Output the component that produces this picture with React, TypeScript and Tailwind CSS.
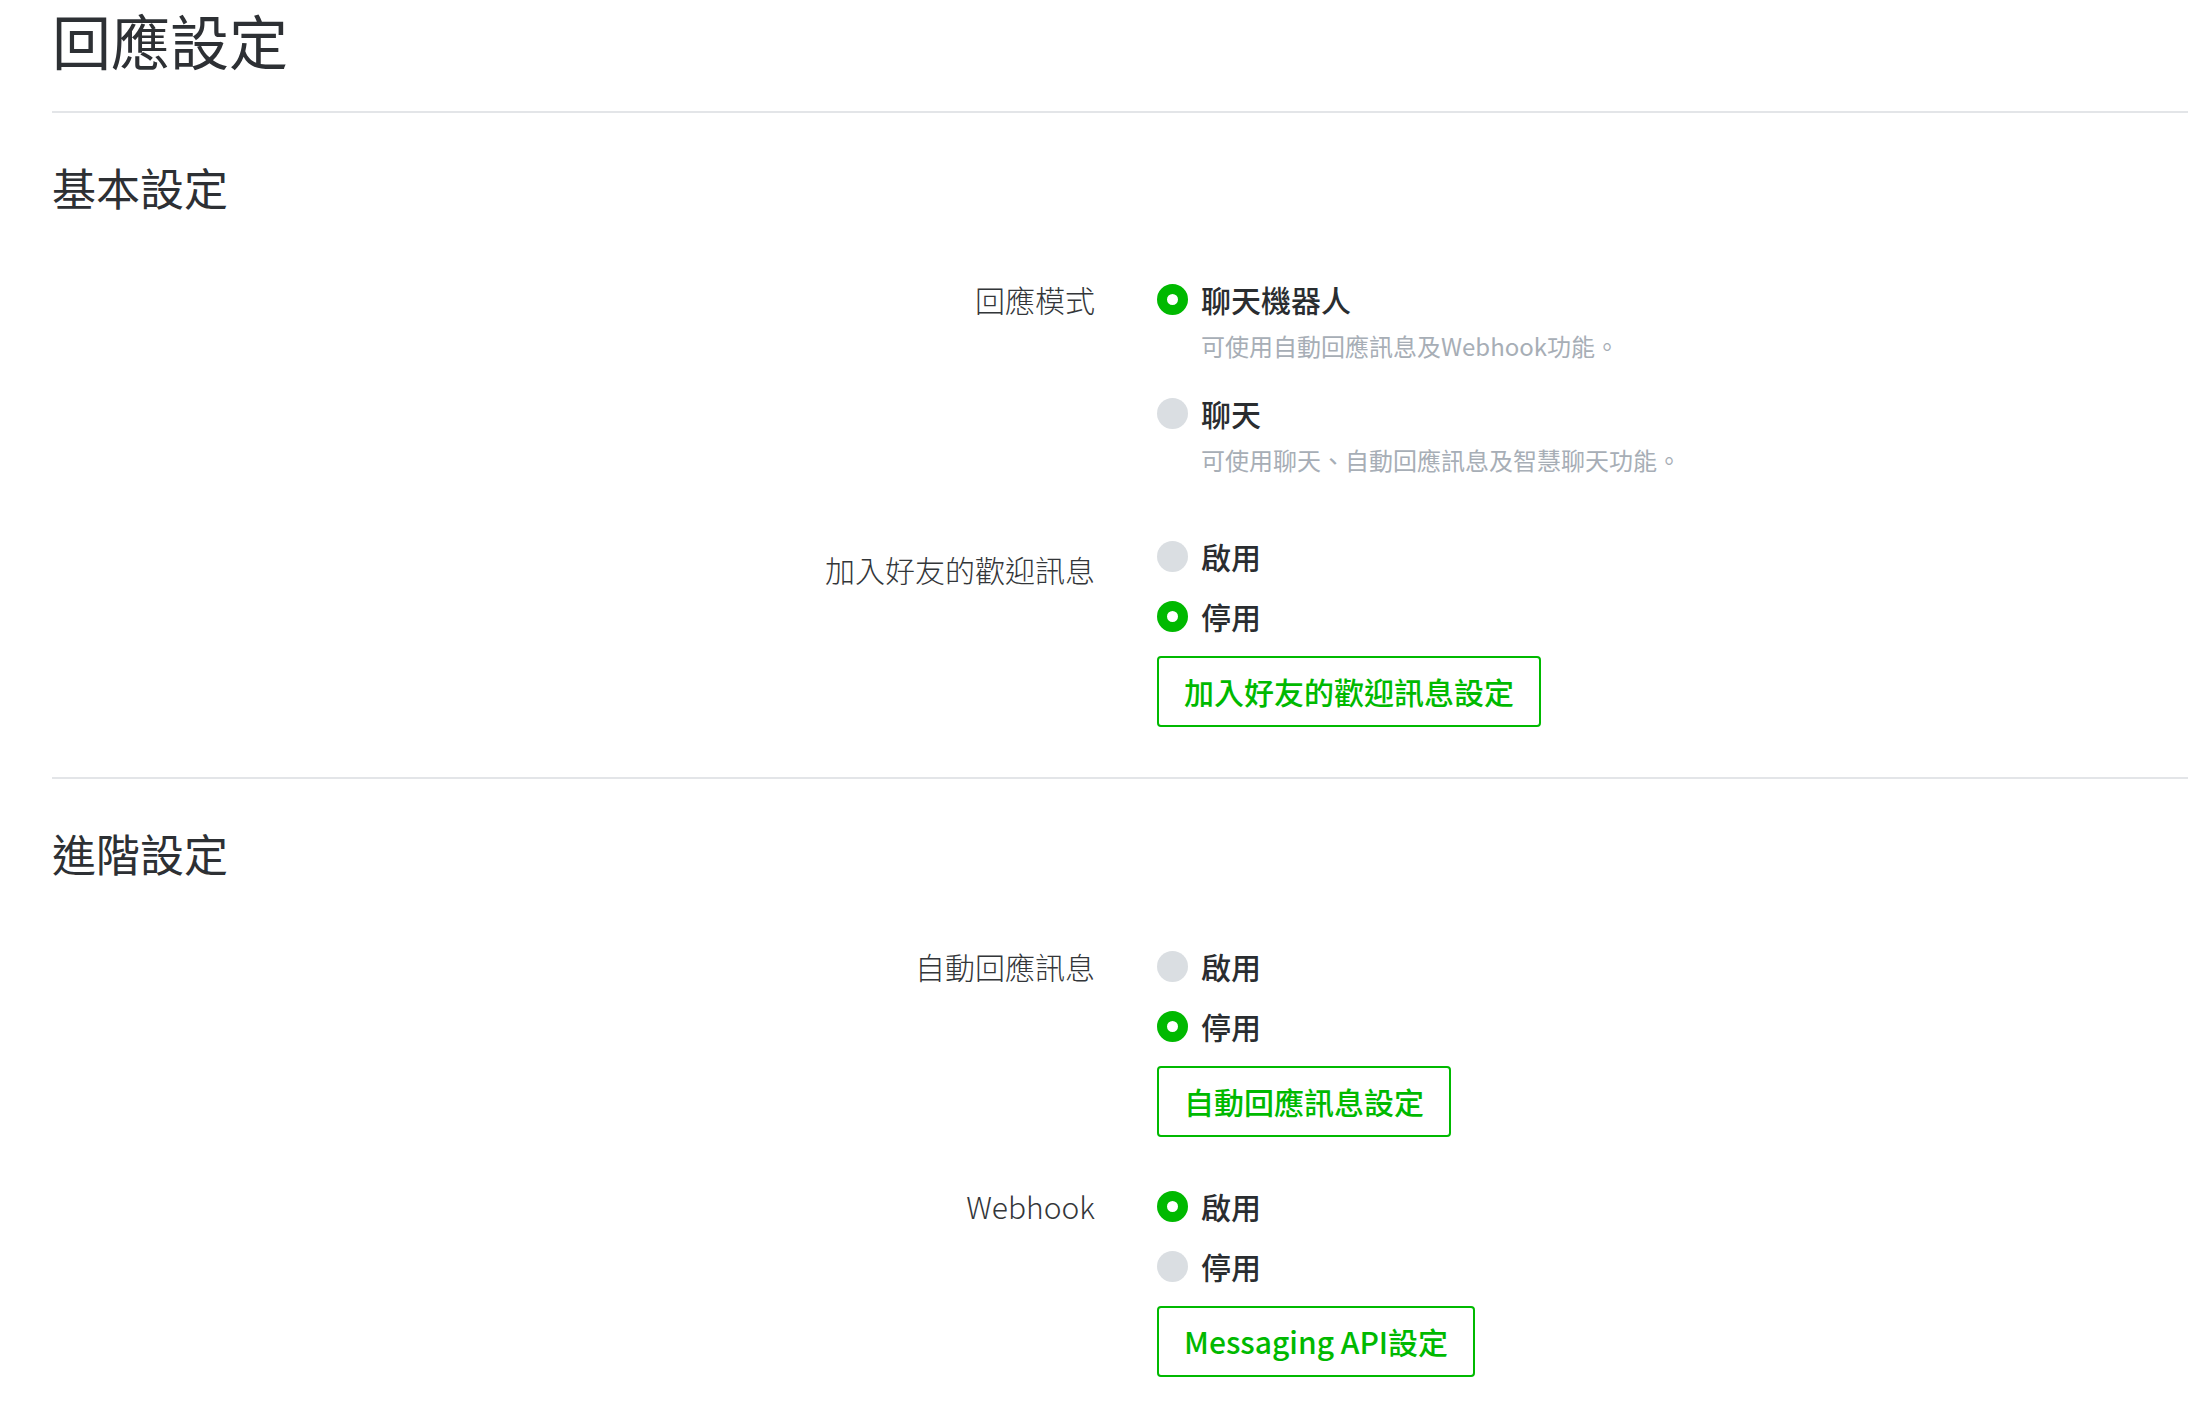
import React from 'react';

interface Option {
  label: string;
  checked: boolean;
  desc?: string;
}

interface SettingRowProps {
  title: string;
  options: Option[];
  button?: string;
  titleOffset?: string;
  className?: string;
}

const Radio: React.FC<{ checked: boolean }> = ({ checked }) =>
  checked ? (
    <span className="w-[31px] h-[31px] rounded-full border-[10px] border-[#00b900] bg-white shrink-0" />
  ) : (
    <span className="w-[31px] h-[31px] rounded-full bg-[#dadee2] shrink-0" />
  );

const SettingRow: React.FC<SettingRowProps> = ({ title, options, button, titleOffset = '', className = '' }) => {
  return (
    <div className={`grid grid-cols-[1043px_1fr] gap-x-[62px] ${className}`}>
      <div className={`text-right text-[30px] leading-[42px] font-light text-[#333639] ${titleOffset}`}>{title}</div>
      <div className="flex flex-col">
        {options.map((opt, i) => (
          <div key={opt.label} className={i > 0 ? (options[i - 1].desc ? 'mt-[29px]' : 'mt-[18px]') : ''}>
            <div className="flex items-center gap-[13px] h-[42px]">
              <Radio checked={opt.checked} />
              <span className="text-[30px] leading-[42px] font-medium text-[#2a2d30]">{opt.label}</span>
            </div>
            {opt.desc && (
              <div className="mt-[9px] pl-[44px] text-[24px] leading-[34px] text-[#a7aeb6]">{opt.desc}</div>
            )}
          </div>
        ))}
        {button && (
          <div className="mt-[19px]">
            <button className="h-[71px] px-[25px] border-2 border-[#00b900] rounded-[4px] text-[30px] font-medium text-[#00b900] bg-white">
              {button}
            </button>
          </div>
        )}
      </div>
    </div>
  );
};

export default function App() {
  return (
    <div
      className="min-h-[1420px] bg-white pl-[52px]"
      style={{ fontFamily: '"Noto Sans CJK TC", "Noto Sans", sans-serif' }}
    >
      <h1 className="text-[59px] leading-[80px] font-normal text-[#2d3034]">回應設定</h1>
      <div className="mt-[31px] h-[2px] bg-[#e3e5e8]" />

      <h2 className="mt-[44px] text-[44px] leading-[60px] font-normal text-[#2d3034]">基本設定</h2>
      <SettingRow
        className="mt-[61px]"
        title="回應模式"
        options={[
          { label: '聊天機器人', checked: true, desc: '可使用自動回應訊息及Webhook功能。' },
          { label: '聊天', checked: false, desc: '可使用聊天、自動回應訊息及智慧聊天功能。' },
        ]}
      />
      <SettingRow
        className="mt-[58px]"
        title="加入好友的歡迎訊息"
        titleOffset="mt-[13px]"
        options={[
          { label: '啟用', checked: false },
          { label: '停用', checked: true },
        ]}
        button="加入好友的歡迎訊息設定"
      />
      <div className="mt-[50px] h-[2px] bg-[#e3e5e8]" />

      <h2 className="mt-[44px] text-[44px] leading-[60px] font-normal text-[#2d3034]">進階設定</h2>
      <SettingRow
        className="mt-[62px]"
        title="自動回應訊息"
        options={[
          { label: '啟用', checked: false },
          { label: '停用', checked: true },
        ]}
        button="自動回應訊息設定"
      />
      <SettingRow
        className="mt-[48px]"
        title="Webhook"
        options={[
          { label: '啟用', checked: true },
          { label: '停用', checked: false },
        ]}
        button="Messaging API設定"
      />
    </div>
  );
}
